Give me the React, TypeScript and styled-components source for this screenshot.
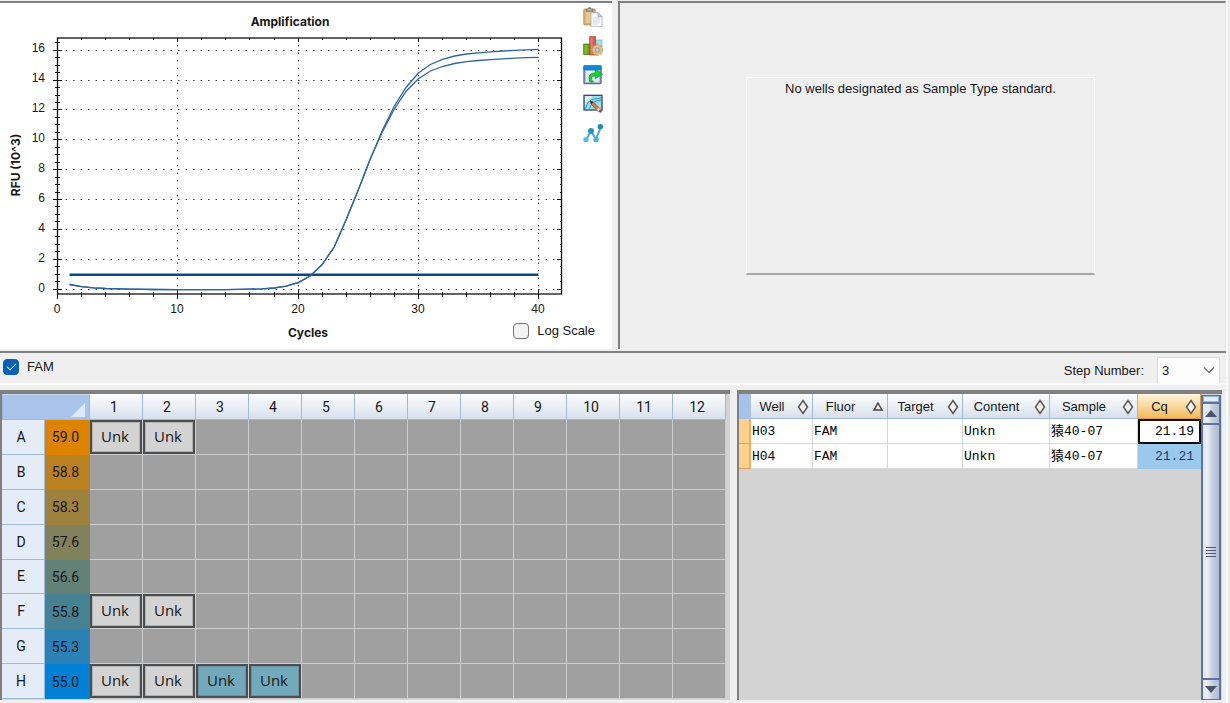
import React, { useState } from "react";
import styled, { createGlobalStyle, css } from "styled-components";

const GlobalStyle = createGlobalStyle`
  *, *::before, *::after { box-sizing: border-box; }
  body {
    margin: 0;
    background: #efefef;
    color: #161616;
    font: 13px/16px "Liberation Sans", Arial, sans-serif;
  }
`;

const ink = "#7f8080";
const axisFont = `Inter, "Liberation Sans", sans-serif`;

const Page = styled.main`
  display: flex;
  flex-direction: column;
  min-height: 100vh;
  padding: 1px 4px 3px 0;
  background: linear-gradient(to left, #e9e9e9 2px, #fbfbfb 2px, #fbfbfb 4px, #efefef 4px);
`;

/* ---------- Upper panels ---------- */

const UpperPanels = styled.div`
  display: grid;
  grid-template-columns: minmax(0, 612fr) minmax(0, 608fr);
  gap: 6px;
`;

const ChartPanel = styled.section`
  display: grid;
  grid-template-columns: minmax(0, 1fr) 32px;
  border-top: 2px solid ${ink};
  background: #fff;
`;

const ChartTitle = styled.h2`
  margin: 0;
  padding-top: 11px;
  height: 30px;
  font: 700 12px/16px ${axisFont};
  text-align: center;
`;

const ChartTools = styled.div`
  grid-column: 2;
  grid-row: 1 / 3;
  display: flex;
  flex-direction: column;
  gap: 9px;
  padding: 4px 0 0 3px;
`;

const ToolButton = styled.button`
  display: block;
  width: 20px;
  height: 20px;
  padding: 0;
  border: 0;
  background: none;

  svg {
    display: block;
    width: 20px;
    height: 20px;
  }
`;

const Plot = styled.svg`
  grid-column: 1;
  grid-row: 2;
  display: block;
  width: 100%;
  height: auto;
  font-family: "Liberation Sans", Arial, sans-serif;
  font-size: 12px;
`;

const ChartFooter = styled.div`
  grid-column: 1 / 3;
  display: grid;
  grid-template-columns: 1fr auto 1fr;
  height: 30px;
  padding: 4px 17px 0 21px;
`;

const AxisTitle = styled.strong`
  grid-column: 2;
  padding-top: 2px;
  font: 700 12px/16px ${axisFont};
`;

const CheckLabel = styled.label`
  justify-self: end;
  display: flex;
  align-items: center;
  gap: 8px;
  height: 16px;
`;

const CheckBox = styled.input`
  appearance: none;
  display: grid;
  place-items: center;
  width: 16px;
  height: 16px;
  margin: 0;
  border: 1px solid #747474;
  border-radius: 4px;
  background: #f3f3f3;

  &:checked {
    border-color: #0560b6;
    background: #0560b6;
  }

  &:checked::after {
    content: "";
    width: 9px;
    height: 5px;
    margin-bottom: 3px;
    border: solid #cfe2f5;
    border-width: 0 0 1px 1px;
    transform: rotate(-45deg);
  }
`;

const StandardPanel = styled.section`
  display: flex;
  justify-content: center;
  align-items: flex-start;
  padding: 74px 4px 0 0;
  border-top: 2px solid ${ink};
  border-left: 2px solid ${ink};
  border-right: 1px solid #e3e3e3;
`;

const Notice = styled.p`
  width: 58%;
  height: 198px;
  margin: 0;
  padding-top: 3px;
  border: 1px solid #fbfbfb;
  border-bottom: 2px solid #a6a6a6;
  text-align: center;
`;

/* ---------- Fluorophore bar ---------- */

const FluorBar = styled.section`
  display: flex;
  justify-content: space-between;
  margin: 2px 0 5px;
  height: 34px;
  padding: 0 6px 0 3px;
  border-top: 2px solid ${ink};
  border-bottom: 2px solid #fcfcfc;
`;

const FluorCheck = styled(CheckLabel)`
  margin-top: 6px;
`;

const StepLabel = styled.label`
  display: flex;
  align-items: flex-end;
  gap: 13px;

  > span:first-child {
    padding-bottom: 4px;
  }
`;

const SelectWrap = styled.span`
  position: relative;
  width: 63px;
  height: 26px;

  svg {
    position: absolute;
    right: 5px;
    top: 9px;
    pointer-events: none;
  }
`;

const StepSelect = styled.select`
  appearance: none;
  width: 100%;
  height: 100%;
  padding: 0 4px;
  border: 1px solid #d9d9d9;
  border-bottom: 0;
  border-radius: 2px 2px 0 0;
  background: #fdfdfd;
  color: inherit;
  font: inherit;
`;

/* ---------- Lower panels ---------- */

const LowerPanels = styled.div`
  flex: 1;
  display: grid;
  grid-template-columns: minmax(0, 730fr) minmax(0, 485fr);
  gap: 7px;
  padding-right: 4px;
`;

const GridPanel = styled.section`
  border-top: 4px solid ${ink};
  border-left: 2px solid ${ink};
  background: #d3d3d3;
`;

const PlatePanel = styled(GridPanel)`
  padding-right: 4px;
`;

const PlateTable = styled.table`
  width: 100%;
  height: 305px;
  table-layout: fixed;
  border-collapse: separate;
  border-spacing: 0;
  font: 14px/16px Roboto, "Liberation Sans", sans-serif;
  text-align: center;
`;

const headFill = css`
  background: linear-gradient(#fbfcfd, #e9eef5 55%, #d6dfeb);
  border-right: 1px solid #9dbad9;
  border-bottom: 1px solid #9dbad9;
`;

const ColumnHead = styled.th`
  height: 26px;
  padding: 0 4px 0 0;
  font-weight: 400;
  ${headFill}
`;

const CornerHead = styled.th`
  padding: 0;
  border: 1px solid #9dbad9;
  border-top-color: #c7d9ef;
  background: #a9c4ea;

  svg {
    display: block;
    margin: 6px 4px 0 auto;
  }
`;

const RowHead = styled.th`
  padding: 0 4px 0 0;
  border-right: 1px solid #9dbad9;
  border-bottom: 1px solid #9dbad9;
  background: #e4ecf7;
  font-weight: 400;
`;

const TempCell = styled.td<{ $tone: string }>`
  padding: 0 4px 0 0;
  background: ${(p) => p.$tone};
`;

const Well = styled.td<{ $fill?: string }>`
  height: 34px;
  padding: 0 2px 2px 0;
  border-right: 1px solid #cdcdcd;
  border-bottom: 1px solid #cdcdcd;
  background: #a0a0a0;
  font: 15px/18px "Open Sans", "Noto Sans", sans-serif;

  ${(p) =>
    p.$fill &&
    css`
      box-shadow: inset 0 0 0 2px #4b4e50, inset 0 0 0 3px rgba(80, 80, 80, 0.25);
      background: ${p.$fill};
    `}
`;

const ResultPanel = styled(GridPanel)`
  display: flex;
  align-items: stretch;
`;

const ResultArea = styled.div`
  flex: 1;
  min-width: 0;
`;

const ResultTable = styled.table`
  width: 100%;
  table-layout: fixed;
  border-collapse: separate;
  border-spacing: 0;
`;

const SortHead = styled.th<{ $active?: boolean }>`
  height: 25px;
  padding: 0;
  ${headFill}
  ${(p) =>
    p.$active &&
    css`
      border-color: #e79b45;
      background: linear-gradient(#fdf3df, #f9d99c 50%, #f3b95a);
    `}
`;

const SortButton = styled.button`
  display: flex;
  align-items: center;
  width: 100%;
  height: 24px;
  padding: 2px 3px 0 0;
  border: 0;
  background: none;
  color: inherit;
  font: inherit;
  font-weight: 400;

  span {
    flex: 1;
    padding-right: 4px;
  }
`;

const SelectorHead = styled.th`
  padding: 0;
  background: #a6c2ea;
`;

const RowSelector = styled.th`
  padding: 0;
  border-right: 2px solid #f5ab60;
  border-bottom: 1px solid #f19b4e;
  background: #ffd18b;
`;

const DataCell = styled.td<{ $state?: "focus" | "selected"; $numeric?: boolean }>`
  height: 25px;
  padding: 2px 1px 0;
  border-right: 1px solid #d3d6da;
  border-bottom: 1px solid #d9d9d9;
  background: #fff;
  color: #000;
  font: 13px/16px "Liberation Mono", "Noto Sans CJK SC", monospace;
  white-space: nowrap;
  ${(p) => p.$numeric && "padding-right: 6px; text-align: right;"}
  ${(p) => p.$state === "focus" && "border: 2px solid #0c0c0c; padding-right: 5px; padding-top: 1px;"}
  ${(p) => p.$state === "selected" && "background: #9bc9ee; border-color: #9bc9ee; color: #163f66;"}
`;

const ScrollBar = styled.div`
  display: flex;
  flex-direction: column;
  gap: 2px;
  width: 20px;
  margin: 1px 1px 0 2px;
  background: #5c73a0;
  padding: 1px 2px;
`;

const scrollFill = "linear-gradient(to right, #dde4ee, #eef1f6 25%, #c4cfdf 60%, #afbdd3)";

const SplitBox = styled.div`
  height: 6px;
  border: 1px solid #8fb2df;
  background: #e3eefb;
`;

const ScrollButton = styled.button`
  display: grid;
  place-items: center;
  height: 19px;
  padding: 0;
  border: 0;
  background: ${scrollFill};
`;

const ScrollThumb = styled.div`
  flex: 1;
  display: grid;
  place-items: center;
  background: ${scrollFill};
`;

/* ---------- Drawings ---------- */

const PasteIcon = () => (
  <svg viewBox="0 0 60 60" aria-hidden="true">
    <rect x="2" y="6" width="35" height="48" rx="3" fill="#d9ad68" stroke="#b78d49" strokeWidth="2" />
    <rect x="8" y="14" width="24" height="34" fill="#e8c992" />
    <path d="M10 13V6h5q1-5 5-5t5 5h5v7z" fill="#8c8b84" stroke="#64635e" strokeWidth="1.5" />
    <rect x="14" y="7" width="12" height="3" fill="#d3d1c8" />
    <path d="M24 17h21l12 12v30H24z" fill="#fbfcfe" stroke="#969aa5" strokeWidth="2" />
    <path d="M45 17v12h12z" fill="#d0d4dc" stroke="#969aa5" strokeWidth="2" />
    <path d="M29 33h22M29 39h22M29 45h22M29 51h18" stroke="#b9c4d8" strokeWidth="2" />
  </svg>
);

const gearTeeth = [0, 45, 90, 135, 180, 225, 270, 315];

const ChartSettingsIcon = () => (
  <svg viewBox="0 0 60 60" aria-hidden="true">
    <rect x="39" y="12" width="18" height="36" fill="#a6dcee" stroke="#72b5cf" strokeWidth="2" />
    <rect x="2" y="24" width="18" height="32" fill="#62a51b" stroke="#3b7a0a" strokeWidth="2" />
    <path d="M5 27h8v26H5z" fill="#7dbb2d" />
    <rect x="20" y="2" width="18" height="55" fill="#d65c4f" stroke="#b34238" strokeWidth="2" />
    <path d="M23 5h6v49h-6z" fill="#e57f72" />
    <g fill="#d4b078" stroke="#b08c56" strokeWidth="1">
      {gearTeeth.map((a) => (
        <rect key={a} x="39" y="25" width="8" height="10" rx="2" transform={`rotate(${a} 43 42)`} />
      ))}
    </g>
    <circle cx="43" cy="42" r="14" fill="#e0c08c" />
    <circle cx="43" cy="42" r="8" fill="#c9a56c" />
    <circle cx="43" cy="42" r="5" fill="#d9dfe8" stroke="#8b8f98" strokeWidth="2" />
  </svg>
);

const ExportIcon = () => (
  <svg viewBox="0 0 60 60" aria-hidden="true">
    <rect x="3" y="3" width="51" height="53" rx="2" fill="#b4c0d1" stroke="#586b89" strokeWidth="4" />
    <rect x="2" y="2" width="53" height="13" rx="3" fill="#0a8cdb" stroke="#0667ad" strokeWidth="1" />
    <rect x="9" y="18" width="39" height="32" fill="#e8edf4" />
    <path
      d="M19 49Q13 24 37 23V13L59 28 37 41V33Q24 32 26 43Q27 49 32 50Q25 54 19 49z"
      fill="#12d436"
      stroke="#0c9c25"
      strokeWidth="2"
      strokeLinejoin="round"
    />
  </svg>
);

const EditPlotIcon = () => (
  <svg viewBox="0 0 60 60" aria-hidden="true">
    <rect x="3" y="4" width="54" height="44" fill="#9fdff1" stroke="#3a4674" strokeWidth="4" />
    <path d="M6 7h22L6 32z" fill="#dff8fd" />
    <path d="M8 44Q14 17 34 15T55 10M20 44Q24 20 54 18" fill="none" stroke="#278eae" strokeWidth="3" />
    <path d="M6 25h48M30 7v38" fill="none" stroke="#6cc0d8" strokeWidth="1.5" />
    <path d="M21 21l10 3 22 22-7 7-21-22z" fill="#dc7b31" stroke="#8b4519" strokeWidth="2" />
    <path d="M21 21l10 3-6 7z" fill="#3c2d2b" />
    <path d="M47 40l7 7-7 7-7-7z" fill="#ddd0b6" stroke="#986b4e" />
    <circle cx="52" cy="52" r="4" fill="#b5373d" />
  </svg>
);

const TrendIcon = () => (
  <svg viewBox="0 0 60 60" aria-hidden="true">
    <path d="M10 49L24 24 39 49 54 11" fill="none" stroke="#48acd0" strokeWidth="6" />
    <circle cx="9" cy="50" r="8" fill="#5bbddc" />
    <circle cx="24" cy="24" r="9" fill="#2a93bb" />
    <circle cx="39" cy="50" r="8" fill="#4fb3d5" />
    <circle cx="52" cy="11" r="8" fill="#1a8db6" />
  </svg>
);

const SortNoneIcon = () => (
  <svg width="12" height="16" viewBox="0 0 12 16" aria-hidden="true">
    <path d="M6 1.5L10.5 8 6 14.5 1.5 8z" fill="#f3f3f3" stroke="#555" strokeWidth="1.5" />
  </svg>
);

const SortAscIcon = () => (
  <svg width="12" height="16" viewBox="0 0 12 16" aria-hidden="true">
    <path d="M6 4L10 11H2z" fill="#f3f3f3" stroke="#444" strokeWidth="1.5" />
  </svg>
);

/* ---------- Amplification plot ---------- */

const xAt = (cycle: number) => 57.5 + cycle * 12.03;
const yAt = (rfu: number) => 289.1 - rfu * 14.93;
const crisp = (v: number) => Math.floor(v) + 0.5;

const sharedCurve: [number, number][] = [
  [1, 284.5], [2, 286.6], [3, 287.8], [4, 288.5], [6, 289.1], [8, 289.5], [10, 289.7], [12, 289.7],
  [14, 289.6], [16, 289.2], [17, 288.8], [18, 288], [19, 286.2], [20, 282.6], [21, 276], [22, 264.5],
  [23, 247], [24, 219.5], [25, 190], [26, 159],
];
const upperCurve: [number, number][] = [
  ...sharedCurve,
  [27, 130.5], [28, 106], [29, 87], [30, 73], [31, 64.5], [32, 59.3], [33, 56], [34, 54],
  [35, 52.8], [36, 51.8], [37, 51], [38, 50.4], [39, 49.8], [40, 49.3],
];
const lowerCurve: [number, number][] = [
  ...sharedCurve,
  [27, 132], [28, 109], [29, 91], [30, 78.7], [31, 71], [32, 66.5], [33, 63.5], [34, 61.7],
  [35, 60.5], [36, 59.6], [37, 58.9], [38, 58.2], [39, 57.7], [40, 57.3],
];
const toPoints = (curve: [number, number][]) => curve.map(([c, y]) => `${xAt(c)},${y}`).join(" ");

const range = (n: number) => Array.from({ length: n }, (_, i) => i);

const AmplificationPlot = () => (
  <Plot viewBox="0 33 580 286" role="img" aria-label="RFU against cycles">
    <g stroke="#333" strokeWidth="1" strokeDasharray="1.5 6">
      {range(9).map((i) => (
        <line key={i} x1="58" x2="561" y1={crisp(yAt(i * 2))} y2={crisp(yAt(i * 2))} />
      ))}
      {[10, 20, 30, 40].map((c) => (
        <line key={c} y1="294" y2="38" x1={crisp(xAt(c))} x2={crisp(xAt(c))} />
      ))}
    </g>
    <rect x="57.5" y="38" width="504" height="256" fill="none" stroke="#111" strokeWidth="1.3" />
    <g stroke="#111" strokeWidth="1">
      {range(34).map((i) => {
        const y = crisp(yAt(i / 2));
        const major = i % 4 === 0;
        return <path key={i} d={`M${major ? 53 : 55} ${y}H${major ? 62 : 60}M${major ? 557 : 560} ${y}H562`} />;
      })}
      {range(21).map((i) => {
        const x = crisp(xAt(i * 2));
        const major = i % 5 === 0;
        return <path key={i} d={`M${x} ${major ? 290 : 292}V${major ? 299 : 297}M${x} 38V${major ? 42 : 40}`} />;
      })}
    </g>
    <g fill="#161616">
      {range(9).map((i) => (
        <text key={i} x="45" y={292 - i * 30} textAnchor="end">{i * 2}</text>
      ))}
      {[0, 10, 20, 30, 40].map((c) => (
        <text key={c} x={Math.floor(xAt(c))} y="313" textAnchor="middle">{c}</text>
      ))}
      <text transform="translate(20 165) rotate(-90)" textAnchor="middle" fontFamily={axisFont} fontWeight="700">
        RFU (10^3)
      </text>
    </g>
    <line x1="69.5" x2="538.5" y1="274.7" y2="274.7" stroke="#0f4784" strokeWidth="2.4" />
    <g fill="none" stroke="#2f659f" strokeWidth="1.3">
      <polyline points={toPoints(upperCurve)} />
      <polyline points={toPoints(lowerCurve)} />
    </g>
  </Plot>
);

/* ---------- Data ---------- */

const plainWell = "#d3d3d3";
const pickedWell = "#72a9bb";

const plateRows = [
  { name: "A", temp: "59.0", tone: "#dd8300", wells: [plainWell, plainWell] },
  { name: "B", temp: "58.8", tone: "#bb8121", wells: [] },
  { name: "C", temp: "58.3", tone: "#9e813e", wells: [] },
  { name: "D", temp: "57.6", tone: "#81815b", wells: [] },
  { name: "E", temp: "56.6", tone: "#648178", wells: [] },
  { name: "F", temp: "55.8", tone: "#468194", wells: [plainWell, plainWell] },
  { name: "G", temp: "55.3", tone: "#2981b5", wells: [] },
  { name: "H", temp: "55.0", tone: "#0081d6", wells: [plainWell, plainWell, pickedWell, pickedWell] },
] as { name: string; temp: string; tone: string; wells: string[] }[];

const resultColumns = [
  { name: "Well", width: 62 },
  { name: "Fluor", width: 75 },
  { name: "Target", width: 75 },
  { name: "Content", width: 87 },
  { name: "Sample", width: 88 },
  { name: "Cq", width: 63 },
];

const results = [
  { well: "H03", fluor: "FAM", target: "", content: "Unkn", sample: "猿40-07", cq: "21.19", state: "focus" as const },
  { well: "H04", fluor: "FAM", target: "", content: "Unkn", sample: "猿40-07", cq: "21.21", state: "selected" as const },
];

const tools = [
  { name: "Copy", Icon: PasteIcon },
  { name: "Chart settings", Icon: ChartSettingsIcon },
  { name: "Export", Icon: ExportIcon },
  { name: "Edit plot", Icon: EditPlotIcon },
  { name: "Trace style", Icon: TrendIcon },
];

export default function App() {
  const [fam, setFam] = useState(true);
  const [logScale, setLogScale] = useState(false);
  const [step, setStep] = useState("3");

  return (
    <Page>
      <GlobalStyle />
      <UpperPanels>
        <ChartPanel>
          <ChartTitle>Amplification</ChartTitle>
          <ChartTools>
            {tools.map(({ name, Icon }) => (
              <ToolButton key={name} type="button" aria-label={name}>
                <Icon />
              </ToolButton>
            ))}
          </ChartTools>
          <AmplificationPlot />
          <ChartFooter>
            <AxisTitle>Cycles</AxisTitle>
            <CheckLabel>
              <CheckBox type="checkbox" checked={logScale} onChange={(e) => setLogScale(e.target.checked)} />
              Log Scale
            </CheckLabel>
          </ChartFooter>
        </ChartPanel>
        <StandardPanel>
          <Notice>No wells designated as Sample Type standard.</Notice>
        </StandardPanel>
      </UpperPanels>

      <FluorBar>
        <FluorCheck>
          <CheckBox type="checkbox" checked={fam} onChange={(e) => setFam(e.target.checked)} />
          FAM
        </FluorCheck>
        <StepLabel>
          <span>Step Number:</span>
          <SelectWrap>
            <StepSelect value={step} onChange={(e) => setStep(e.target.value)}>
              {["1", "2", "3", "4"].map((s) => (
                <option key={s}>{s}</option>
              ))}
            </StepSelect>
            <svg width="12" height="8" viewBox="0 0 12 8" aria-hidden="true">
              <path d="M1 1.5L6 6.5 11 1.5" fill="none" stroke="#666" strokeWidth="1.2" />
            </svg>
          </SelectWrap>
        </StepLabel>
      </FluorBar>

      <LowerPanels>
        <PlatePanel>
          <PlateTable>
            <colgroup>
              <col style={{ width: 43 }} />
              <col style={{ width: 45 }} />
              {range(12).map((i) => (
                <col key={i} />
              ))}
            </colgroup>
            <thead>
              <tr>
                <CornerHead colSpan={2}>
                  <svg width="14" height="14" viewBox="0 0 14 14" aria-hidden="true">
                    <path d="M14 0v14H0z" fill="#dce9fa" />
                  </svg>
                </CornerHead>
                {range(12).map((i) => (
                  <ColumnHead key={i} scope="col">{i + 1}</ColumnHead>
                ))}
              </tr>
            </thead>
            <tbody>
              {plateRows.map((row) => (
                <tr key={row.name}>
                  <RowHead scope="row">{row.name}</RowHead>
                  <TempCell $tone={row.tone}>{row.temp}</TempCell>
                  {range(12).map((i) => (
                    <Well key={i} $fill={row.wells[i]}>{row.wells[i] ? "Unk" : null}</Well>
                  ))}
                </tr>
              ))}
            </tbody>
          </PlateTable>
        </PlatePanel>

        <ResultPanel>
          <ResultArea>
            <ResultTable>
              <colgroup>
                <col style={{ width: 12 }} />
                {resultColumns.map((c) => (
                  <col key={c.name} style={{ width: c.width }} />
                ))}
              </colgroup>
              <thead>
                <tr>
                  <SelectorHead />
                  {resultColumns.map((c) => (
                    <SortHead key={c.name} scope="col" $active={c.name === "Cq"}>
                      <SortButton type="button">
                        <span>{c.name}</span>
                        {c.name === "Fluor" ? <SortAscIcon /> : <SortNoneIcon />}
                      </SortButton>
                    </SortHead>
                  ))}
                </tr>
              </thead>
              <tbody>
                {results.map((r) => (
                  <tr key={r.well}>
                    <RowSelector aria-label={r.well} />
                    <DataCell>{r.well}</DataCell>
                    <DataCell>{r.fluor}</DataCell>
                    <DataCell>{r.target}</DataCell>
                    <DataCell>{r.content}</DataCell>
                    <DataCell>{r.sample}</DataCell>
                    <DataCell $numeric $state={r.state}>{r.cq}</DataCell>
                  </tr>
                ))}
              </tbody>
            </ResultTable>
          </ResultArea>
          <ScrollBar>
            <SplitBox />
            <ScrollButton type="button" aria-label="Scroll up">
              <svg width="12" height="7" viewBox="0 0 12 7" aria-hidden="true">
                <path d="M6 0l6 7H0z" fill="#4b5468" />
              </svg>
            </ScrollButton>
            <ScrollThumb>
              <svg width="10" height="10" viewBox="0 0 10 10" aria-hidden="true">
                <path d="M0 .5h10M0 3.5h10M0 6.5h10M0 9.5h10" stroke="#4d5a78" />
              </svg>
            </ScrollThumb>
            <ScrollButton type="button" aria-label="Scroll down">
              <svg width="12" height="7" viewBox="0 0 12 7" aria-hidden="true">
                <path d="M0 0h12L6 7z" fill="#4b5468" />
              </svg>
            </ScrollButton>
          </ScrollBar>
        </ResultPanel>
      </LowerPanels>
    </Page>
  );
}
